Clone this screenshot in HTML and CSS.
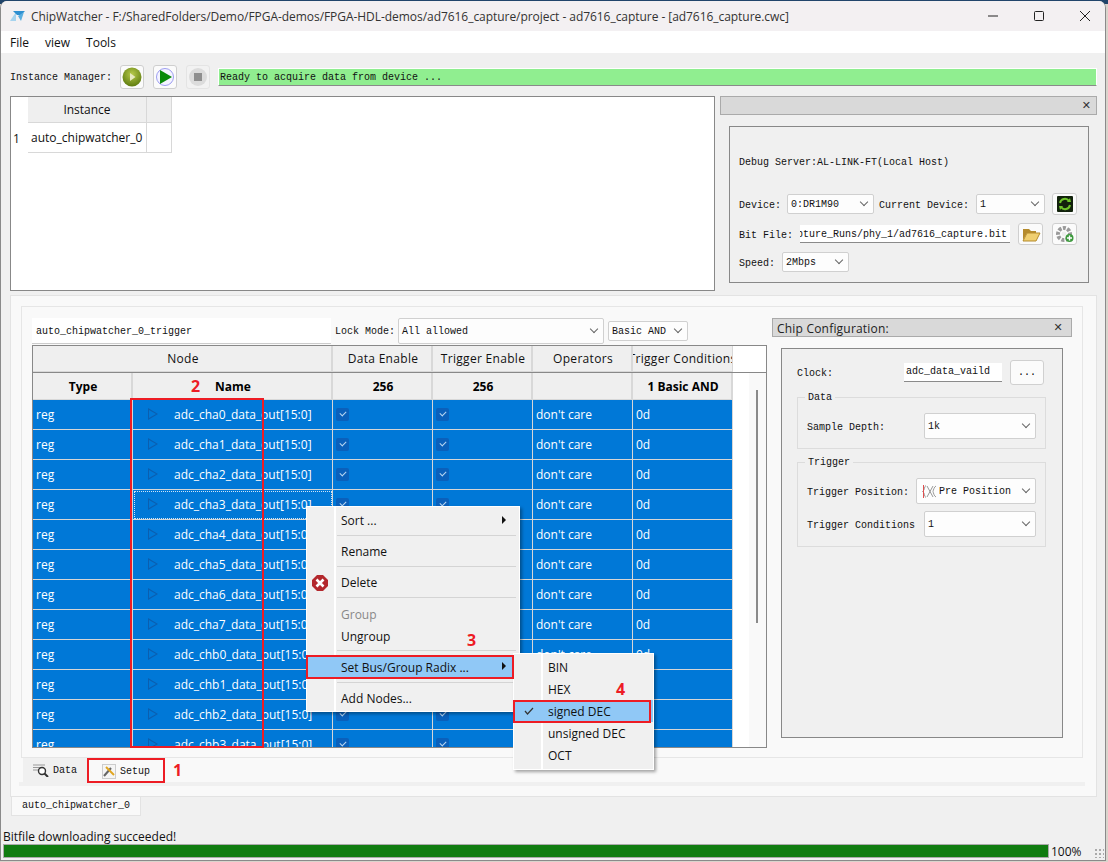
FILE: index.html
```html
<!DOCTYPE html>
<html lang="en">
<head>
<meta charset="utf-8">
<title>ChipWatcher</title>
<link rel="stylesheet" href="styles.css">
</head>
<body>
<div class="window">
  <header class="titlebar">
    <svg class="logo" width="16" height="12" viewBox="0 0 16 12"><path d="M0 11L6 2L6 11Z" fill="#a6d3ee"/><path d="M3 1H15L11 5H7Z" fill="#2f8fd0"/><path d="M8 6L14 2L11 11Z" fill="#5aaee0"/></svg>
    <span class="title-text">ChipWatcher - F:/SharedFolders/Demo/FPGA-demos/FPGA-HDL-demos/ad7616_capture/project - ad7616_capture - [ad7616_capture.cwc]</span>
    <div class="win-controls">
      <svg width="12" height="12" viewBox="0 0 12 12"><path d="M1 6H11" stroke="#222" fill="none"/></svg>
      <svg width="12" height="12" viewBox="0 0 12 12"><rect x="1.5" y="1.5" width="9" height="9" rx="1" stroke="#222" fill="none"/></svg>
      <svg width="12" height="12" viewBox="0 0 12 12"><path d="M1 1L11 11M11 1L1 11" stroke="#222" fill="none"/></svg>
    </div>
  </header>
  <nav class="menubar"><span>File</span><span>view</span><span>Tools</span></nav>
  <section class="toolbar">
    <span class="mono tool-label">Instance Manager:</span>
    <button class="tool-btn"><svg width="20" height="20" viewBox="0 0 20 20"><defs><radialGradient id="olive" cx="50%" cy="35%" r="65%"><stop offset="0" stop-color="#b7c94a"/><stop offset="1" stop-color="#5f7d10"/></radialGradient></defs><circle cx="10" cy="10" r="9.5" fill="url(#olive)"/><path d="M8 6L13.5 10L8 14Z" fill="#e7e9c0"/></svg></button>
    <button class="tool-btn"><svg width="20" height="20" viewBox="0 0 20 20"><circle cx="10" cy="10" r="8.5" fill="#f4f4ff" stroke="#9c9cf0"/><path d="M5 3L17 10L5 17Z" fill="#0a8a0a"/></svg></button>
    <button class="tool-btn disabled"><svg width="20" height="20" viewBox="0 0 20 20"><circle cx="10" cy="10" r="9" fill="#dcdcdc"/><rect x="6" y="6" width="8" height="8" fill="#8f8f8f"/></svg></button>
    <div class="status-field mono">Ready to acquire data from device ...</div>
  </section>

  <section class="top-pane">
    <div class="instance-table">
      <div class="inst-row inst-head"><div class="inst-num"></div><div class="inst-name">Instance</div><div class="inst-end"></div></div>
      <div class="inst-row inst-body"><div class="inst-num">1</div><div class="inst-name">auto_chipwatcher_0</div><div class="inst-end"></div></div>
    </div>
    <aside class="server-dock">
      <div class="dock-title"><span class="dock-close">✕</span></div>
      <div class="server-box mono">
        <div class="server-line">Debug Server:AL-LINK-FT(Local Host)</div>
        <div class="server-row device-row">
          <span>Device:</span>
          <div class="combo device-combo">0:DR1M90<i class="chev"></i></div>
          <span>Current Device:</span>
          <div class="combo current-combo">1<i class="chev"></i></div>
          <button class="tool-btn small"><svg width="18" height="18" viewBox="0 0 18 18"><rect x="1" y="1" width="16" height="16" rx="1" fill="#12220c"/><path d="M4 8A5 5 0 0 1 13 6M14 10A5 5 0 0 1 5 12" stroke="#6fc52a" stroke-width="2" fill="none"/><path d="M11 7L15 7L14 3ZM7 11L3 11L4 15Z" fill="#6fc52a"/></svg></button>
        </div>
        <div class="server-row bit-row">
          <span>Bit File:</span>
          <div class="line-input bit-input"><span>pture_Runs/phy_1/ad7616_capture.bit</span></div>
          <button class="tool-btn small"><svg width="20" height="18" viewBox="0 0 20 18"><path d="M2 15L2 4H8L10 6H15V8H6Z" fill="#b58b2c"/><path d="M2 16L6 8H19L15 16Z" fill="#f0cf70" stroke="#b58b2c"/></svg></button>
          <button class="tool-btn small"><svg width="20" height="18" viewBox="0 0 20 18"><circle cx="9" cy="9" r="6" fill="none" stroke="#9a9a9a" stroke-width="4" stroke-dasharray="3 1.4"/><circle cx="9" cy="9" r="2.4" fill="#eee"/><circle cx="14.5" cy="13" r="4" fill="#3d9a3d"/><path d="M14.5 10.5V15.5M12 13H17" stroke="#fff" stroke-width="1.4"/></svg></button>
        </div>
        <div class="server-row speed-row">
          <span>Speed:</span>
          <div class="combo speed-combo">2Mbps<i class="chev"></i></div>
        </div>
      </div>
    </aside>
  </section>

  <section class="lower-pane">
    <div class="inner-pane">
      <div class="trigger-side">
        <div class="trigger-bar mono">
          <div class="line-input name-input">auto_chipwatcher_0_trigger</div>
          <span class="lock-label">Lock Mode:</span>
          <div class="combo lock-combo">All allowed<i class="chev"></i></div>
          <div class="combo and-combo">Basic AND<i class="chev"></i></div>
        </div>
        <div class="node-table">
          <div class="grid-row head1">
            <div class="hc span2">Node</div><div class="hc">Data Enable</div><div class="hc">Trigger Enable</div><div class="hc">Operators</div><div class="hc clip"><span>Trigger Conditions</span></div>
          </div>
          <div class="grid-row head2">
            <div class="hc bold">Type</div><div class="hc bold">Name</div><div class="hc bold">256</div><div class="hc bold">256</div><div class="hc"></div><div class="hc bold">1 Basic AND</div>
          </div>
          <div class="grid-row sel"><div>reg</div><div class="name"><i class="tri"></i>adc_cha0_data_out[15:0]</div><div><i class="chk"></i></div><div><i class="chk"></i></div><div>don't care</div><div>0d</div></div>
          <div class="grid-row sel"><div>reg</div><div class="name"><i class="tri"></i>adc_cha1_data_out[15:0]</div><div><i class="chk"></i></div><div><i class="chk"></i></div><div>don't care</div><div>0d</div></div>
          <div class="grid-row sel"><div>reg</div><div class="name"><i class="tri"></i>adc_cha2_data_out[15:0]</div><div><i class="chk"></i></div><div><i class="chk"></i></div><div>don't care</div><div>0d</div></div>
          <div class="grid-row sel"><div>reg</div><div class="name focus"><i class="tri"></i>adc_cha3_data_out[15:0]</div><div><i class="chk"></i></div><div><i class="chk"></i></div><div>don't care</div><div>0d</div></div>
          <div class="grid-row sel"><div>reg</div><div class="name"><i class="tri"></i>adc_cha4_data_out[15:0]</div><div><i class="chk"></i></div><div><i class="chk"></i></div><div>don't care</div><div>0d</div></div>
          <div class="grid-row sel"><div>reg</div><div class="name"><i class="tri"></i>adc_cha5_data_out[15:0]</div><div><i class="chk"></i></div><div><i class="chk"></i></div><div>don't care</div><div>0d</div></div>
          <div class="grid-row sel"><div>reg</div><div class="name"><i class="tri"></i>adc_cha6_data_out[15:0]</div><div><i class="chk"></i></div><div><i class="chk"></i></div><div>don't care</div><div>0d</div></div>
          <div class="grid-row sel"><div>reg</div><div class="name"><i class="tri"></i>adc_cha7_data_out[15:0]</div><div><i class="chk"></i></div><div><i class="chk"></i></div><div>don't care</div><div>0d</div></div>
          <div class="grid-row sel"><div>reg</div><div class="name"><i class="tri"></i>adc_chb0_data_out[15:0]</div><div><i class="chk"></i></div><div><i class="chk"></i></div><div>don't care</div><div>0d</div></div>
          <div class="grid-row sel"><div>reg</div><div class="name"><i class="tri"></i>adc_chb1_data_out[15:0]</div><div><i class="chk"></i></div><div><i class="chk"></i></div><div>don't care</div><div>0d</div></div>
          <div class="grid-row sel"><div>reg</div><div class="name"><i class="tri"></i>adc_chb2_data_out[15:0]</div><div><i class="chk"></i></div><div><i class="chk"></i></div><div>don't care</div><div>0d</div></div>
          <div class="grid-row sel"><div>reg</div><div class="name"><i class="tri"></i>adc_chb3_data_out[15:0]</div><div><i class="chk"></i></div><div><i class="chk"></i></div><div>don't care</div><div>0d</div></div>
          <div class="v-track"><div class="v-thumb"></div></div>
        </div>
      </div>
      <aside class="config-side">
        <div class="dock-title chip-title"><span>Chip Configuration:</span><span class="dock-close">✕</span></div>
        <div class="config-box mono">
          <div class="clock-row">
            <span class="clock-label">Clock:</span>
            <div class="line-input clock-input">adc_data_vaild</div>
            <button class="more-btn">...</button>
          </div>
          <fieldset class="group data-group">
            <legend>Data</legend>
            <div class="group-row"><span>Sample Depth:</span><div class="combo cfg-combo">1k<i class="chev"></i></div></div>
          </fieldset>
          <fieldset class="group trig-group">
            <legend>Trigger</legend>
            <div class="group-row"><span>Trigger Position:</span><div class="combo pos-combo"><svg width="14" height="13" viewBox="0 0 14 13"><path d="M4 0.500C2 1 3 5.500 0.500 6.500C3 7.500 2 12 4 12.500M5 1L11 12M11 1L5 12M14 1C12 2 11.500 5 11 6.500C11.500 8 12 11 14 12" stroke="#999" fill="none"/><path d="M1.500 0V13" stroke="#e05050"/></svg><span>Pre Position</span><i class="chev"></i></div></div>
            <div class="group-row"><span>Trigger Conditions</span><div class="combo cfg-combo">1<i class="chev"></i></div></div>
          </fieldset>
        </div>
      </aside>
    </div>
    <div class="view-tabs mono">
      <div class="view-tab"><svg width="16" height="13" viewBox="0 0 16 13"><path d="M0 1H12M0 3.500H8M0 6H6" stroke="#999"/><circle cx="9" cy="7" r="3.500" fill="#fff" stroke="#333" stroke-width="1.400"/><path d="M11.500 9.500L15 13" stroke="#333" stroke-width="2"/></svg>Data</div>
      <div class="view-tab active"><svg width="14" height="15" viewBox="0 0 14 15"><rect x="0.500" y="0.500" width="13" height="14" fill="#f5f5f5" stroke="#ccc"/><path d="M2 12L9 4" stroke="#666" stroke-width="2"/><path d="M4 3L12 11" stroke="#e0a520" stroke-width="2"/></svg>Setup</div>
    </div>
    <div class="tab-band"></div>
  </section>
  <div class="instance-tab mono">auto_chipwatcher_0</div>
  <div class="status-msg">Bitfile downloading succeeded!</div>
  <footer class="progress-row">
    <div class="progress"></div>
    <span class="pct">100%</span>
    <div class="grip"></div>
  </footer>

  <div class="menu context-menu">
    <div class="mi"><span>Sort ...</span><i class="arrow"></i></div>
    <hr>
    <div class="mi"><span>Rename</span></div>
    <hr>
    <div class="mi"><svg class="mi-icon" width="16" height="16" viewBox="0 0 16 16"><path d="M5 0H11L16 5V11L11 16H5L0 11V5Z" fill="#b3282d"/><path d="M4.500 4.500L11.500 11.500M11.500 4.500L4.500 11.500" stroke="#fff" stroke-width="2.600"/></svg><span>Delete</span></div>
    <hr>
    <div class="mi off low"><span>Group</span></div>
    <div class="mi low"><span>Ungroup</span></div>
    <hr>
    <div class="mi hot low"><span>Set Bus/Group Radix ...</span><i class="arrow"></i></div>
    <hr class="wide-gap">
    <div class="mi"><span>Add Nodes...</span></div>
  </div>
  <div class="menu sub-menu">
    <div class="mi low"><span>BIN</span></div>
    <div class="mi low"><span>HEX</span></div>
    <div class="mi hot low"><svg class="mi-check" width="10" height="8" viewBox="0 0 10 8"><path d="M1 4L3.500 7L9 1" stroke="#333" stroke-width="1.200" fill="none"/></svg><span>signed DEC</span></div>
    <div class="mi low"><span>unsigned DEC</span></div>
    <div class="mi low"><span>OCT</span></div>
  </div>

  <div class="mark box-name"></div>
  <div class="mark box-setup"></div>
  <div class="mark box-radix"></div>
  <div class="mark box-signed"></div>
  <span class="num n1">1</span>
  <span class="num n2">2</span>
  <span class="num n3">3</span>
  <span class="num n4">4</span>
</div>
</body>
</html>
```
FILE: styles.css
```css
* { box-sizing: border-box; }
html, body { margin: 0; padding: 0; }
body {
  width: 1108px; height: 862px; overflow: hidden;
  background: linear-gradient(#21456b 0, #21456b 4px, #d9d4cc 4px, #d9d4cc 100%);
  font-family: "Open Sans", "Noto Sans", sans-serif; font-size: 12px; color: #111;
  padding: 1px 2px 1px 0;
}
.mono { font-family: "Liberation Mono", monospace; font-size: 10px; color: #111; }
.window {
  position: relative; width: 1106px; height: 860px; background: #f0f0f0;
  border-radius: 7px 7px 0 0; border: 1px solid #8a8a8a; border-width: 0 1px 1px 1px;
  overflow: hidden; display: flex; flex-direction: column;
}
.titlebar { height: 30px; flex: none; background: #f3f0f2; display: flex; align-items: center; padding-left: 9px; }
.logo { margin-right: 5px; }
.title-text { font-size: 12px; color: #333; white-space: nowrap; letter-spacing: -0.05px; }
.win-controls { margin-left: auto; display: flex; gap: 34px; padding-right: 14px; }
.menubar { height: 22px; flex: none; background: #fff; display: flex; gap: 16px; align-items: center; padding-left: 9px; }
.toolbar { height: 43px; flex: none; display: flex; align-items: center; padding: 4px 8px 0 9px; }
.tool-label { padding-top: 2px; }
.tool-btn {
  width: 24px; height: 24px; padding: 0; margin-left: 9px; background: #fbfbfb;
  border: 1px solid #cfcfcf; border-radius: 3px; display: flex; align-items: center; justify-content: center; flex: none;
}
.toolbar .mono + .tool-btn { margin-left: 8px; }
.tool-btn.disabled { background: #f2f2f2; border-color: #e4e4e4; }
.status-field {
  flex: 1; margin-left: 8px; height: 18px; line-height: 17px; background: #90ee90; padding-left: 1px;
  border: 1px solid #fff; border-bottom-color: #8a8a8a; white-space: nowrap;
}
.top-pane { height: 195px; flex: none; display: flex; padding: 0 8px 0 9px; gap: 5px; }
.instance-table { width: 705px; flex: none; background: #fff; border: 1px solid #888; }
.inst-row { display: flex; }
.inst-num { width: 17px; flex: none; }
.inst-name { width: 119px; flex: none; display: flex; align-items: center; }
.inst-end { width: 25px; flex: none; }
.inst-head { height: 26px; }
.inst-head > div { background: #efefef; border: 1px solid #d8d8d8; border-width: 0 1px 1px 0; justify-content: center; }
.inst-head .inst-num { background: #fff; border: 0; }
.inst-body { height: 30px; }
.inst-body .inst-num { display: flex; align-items: center; padding-left: 2px; background: #fff; }
.inst-body .inst-name { padding-left: 3px; border: 1px solid #d8d8d8; border-width: 0 1px 1px 0; white-space: nowrap; }
.inst-body .inst-end { border: 1px solid #d8d8d8; border-width: 0 1px 1px 0; }
.server-dock { width: 377px; flex: none; display: flex; flex-direction: column; }
.dock-title {
  height: 19px; flex: none; background: #d9d9d9; border: 1px solid #aaa; display: flex;
  align-items: center; justify-content: flex-end; padding: 0 5px;
}
.dock-close { font-size: 11px; font-weight: 700; color: #333; font-family: "DejaVu Sans", sans-serif; line-height: 12px; }
.server-box {
  margin: 11px 8px 8px 9px; flex: 1; border: 1px solid #888; padding: 29px 9px 0; background: #f0f0f0;
}
.server-line { height: 14px; line-height: 14px; }
.server-row { display: flex; align-items: center; white-space: nowrap; }
.server-row > span { padding-top: 2px; }
.device-row { margin-top: 23px; height: 22px; }
.device-combo { width: 87px; margin-left: 6px; margin-right: 5px; }
.current-combo { width: 69px; margin-left: 7px; }
.device-row .tool-btn { margin-left: 7px; }
.tool-btn.small { width: 25px; height: 22px; }
.bit-row { margin-top: 8px; height: 22px; }
.bit-input { width: 210px; margin-left: 7px; height: 18px; overflow: hidden; justify-content: flex-end; padding: 2px 3px 0 0; }
.bit-input span { flex: none; }
.bit-row .tool-btn { margin-left: 8px; }
.bit-row .tool-btn:last-child { margin-left: 9px; }
.speed-row { margin-top: 7px; height: 20px; }
.speed-combo { width: 67px; margin-left: 7px; }
.combo {
  position: relative; height: 20px; line-height: 19px; background: #fdfdfd; border: 1px solid #d0d0d0;
  border-radius: 2px; padding-left: 3px; flex: none; white-space: nowrap; font-family: "Liberation Mono", monospace; font-size: 10px;
}
.chev {
  position: absolute; right: 6px; top: 50%; width: 6px; height: 6px; margin-top: -5px;
  border: 1px solid #666; border-width: 0 1px 1px 0; transform: rotate(45deg);
}
.line-input {
  background: #fff; border-bottom: 1px solid #8a8a8a; display: flex; align-items: center; white-space: nowrap; flex: none;
}
.lower-pane {
  height: 502px; flex: none; margin: 4px 8px 0 9px; background: #f9f9f9; border: 1px solid #e3e3e3; padding: 10px 13px 0 10px;
}
.inner-pane { height: 452px; display: flex; border: 1px solid #e6e6e6; padding: 10px 0 0 10px; }
.trigger-side { width: 735px; flex: none; display: flex; flex-direction: column; }
.trigger-bar { height: 27px; flex: none; display: flex; align-items: center; }
.name-input { width: 299px; height: 26px; padding: 2px 0 0 4px; border-bottom-color: #ccc; }
.lock-label { margin-left: 4px; width: 63px; padding-top: 2px; }
.lock-combo { width: 206px; height: 26px; line-height: 26px; }
.and-combo { width: 80px; margin-left: 4px; }
.node-table {
  margin-top: 1px; height: 403px; background: #fff; border: 1px solid #888; overflow: hidden; position: relative;
}
.grid-row { display: grid; grid-template-columns: 100px 200px 100px 100px 100px 100px; }
.grid-row > div { white-space: nowrap; }
.head1 { height: 27px; border-bottom: 1px solid #888; grid-template-columns: 300px 100px 100px 100px 100px; }
.head2 { height: 27px; }
.hc {
  background: #efefef; display: flex; align-items: center; justify-content: center; overflow: hidden;
  border-right: 2px solid #d8d8d8; border-bottom: 1px solid #d8d8d8; letter-spacing: 0.3px; padding-left: 2px;
}
.clip { border-right: 1px solid #d8d8d8; padding-left: 0; }
.clip span { flex: none; }
.bold { font-weight: 700; color: #000; letter-spacing: 0; }
.sel { height: 30px; width: 700px; background: #0078d7; color: #fff; }
.sel > div { border-right: 1px solid #d6d6d6; border-bottom: 1px solid #d6d6d6; display: flex; align-items: center; padding: 0 0 0 3px; }
.sel > .name { position: relative; padding-left: 41px; }
.name.focus { outline: 1px dotted #cfe4f7; outline-offset: -2px; }
.tri {
  position: absolute; left: 15px; top: 8px; width: 0; height: 0;
  border-left: 10px solid #0b5fb0; border-top: 6px solid transparent; border-bottom: 6px solid transparent;
}
.tri::after {
  content: ""; position: absolute; left: -9px; top: -4px; width: 0; height: 0;
  border-left: 7px solid #0078d7; border-top: 4px solid transparent; border-bottom: 4px solid transparent;
}
.chk { width: 13px; height: 13px; background: #0a60bb; border-radius: 2px; position: relative; }
.chk::after {
  content: ""; position: absolute; left: 4px; top: 3px; width: 5px; height: 3px;
  border: 1px solid #b9d6f2; border-width: 0 0 1px 1px; transform: rotate(-45deg);
}
.v-track { position: absolute; right: 0; top: 27px; bottom: 0; width: 17px; background: #f9f9f9; }
.v-thumb { margin: 17px 0 0 7px; width: 2px; height: 233px; background: #8a8a8a; }
.config-side { margin-left: 5px; width: 300px; flex: none; padding-top: 1px; }
.chip-title { justify-content: space-between; font-size: 12px; color: #222; padding: 1px 8px 0 4px; width: 300px; letter-spacing: 0.2px; }
.config-box {
  margin: 11px 9px 0 9px; width: 282px; height: 390px; background: #f0f0f0; border: 1px solid #888; padding: 10px 15px;
}
.clock-row { display: flex; align-items: center; height: 26px; }
.clock-label { width: 107px; padding-top: 2px; }
.clock-input { width: 98px; height: 19px; padding-left: 2px; }
.more-btn {
  width: 34px; height: 25px; margin-left: 8px; background: #fbfbfb; border: 1px solid #d0d0d0; border-radius: 3px;
  font: inherit; padding: 0;
}
.group { margin: 0; border: 1px solid #dcdcdc; padding: 0 9px 0 9px; min-width: 0; width: 249px; }
.group legend { padding: 0 3px; margin-left: -2px; line-height: 12px; font-size: 10px; position: relative; top: 1px; }
.data-group { margin-top: 6px; height: 58px; }
.trig-group { margin-top: 7px; height: 91px; }
.group-row { display: flex; align-items: center; justify-content: space-between; height: 26px; margin-top: 7px; white-space: nowrap; }
.group-row > span { padding-top: 2px; }
.data-group .group-row { margin-top: 10px; }
.trig-group .group-row:first-of-type { margin-top: 10px; }
.cfg-combo { width: 112px; height: 26px; line-height: 26px; }
.pos-combo { width: 120px; height: 26px; display: flex; align-items: center; gap: 3px; padding-left: 5px; }
.pos-combo span { padding-top: 2px; line-height: 20px; }
.view-tabs { height: 24px; display: flex; margin-left: 2px; margin-top: 0; align-items: stretch; }
.view-tab { display: flex; align-items: center; gap: 4px; padding: 0 0 0 10px; background: #f0f0f0; width: 65px; }
.view-tab.active { background: #f9f9f9; width: 77px; padding: 2px 0 0 14px; }
.tab-band { height: 4px; background: #f0f0f0; margin: 0 -2px; }
.instance-tab {
  flex: none; margin: 0 0 0 10px; width: 130px; height: 19px; background: #f9f9f9; border: 1px solid #e3e3e3; border-top: 0; text-align: center; line-height: 18px;
}
.status-msg { height: 15px; margin-top: 13px; line-height: 15px; padding-left: 2px; flex: none; white-space: nowrap; }
.progress-row { display: flex; height: 14px; flex: none; position: relative; padding-left: 2px; align-items: center; }
.progress { width: 1046px; height: 14px; background: #107c10; border: 1px solid #aaa; }
.pct { margin-left: 2px; }
.grip { position: absolute; right: 1px; bottom: 0; width: 10px; height: 10px; background: radial-gradient(circle, #aaa 1px, transparent 1.2px) 0 0/4px 4px; }

.menu { position: absolute; background: #f0f0f0; border: 1px solid #fff; box-shadow: 2px 2px 3px rgba(0,0,0,.35); z-index: 5; }
.menu::before { content: ""; position: absolute; left: 27px; top: 0; bottom: 0; width: 2px; background: #fff; }
.mi { height: 22px; position: relative; display: flex; align-items: center; padding: 0 0 2px 34px; color: #111; white-space: nowrap; }
.mi.low { padding-bottom: 0; }
.mi.off { color: #888; }
.mi.hot { background: #90c8f6; }
.menu hr { margin: 3px 3px 5px 30px; border: 0; height: 1px; background: #d4d4d4; }
.menu hr.wide-gap { margin-top: 4px; }
.context-menu { left: 305px; top: 505px; width: 214px; height: 206px; padding-top: 3px; }
.sub-menu { left: 512px; top: 652px; width: 141px; height: 117px; padding-top: 2px; }
.arrow {
  position: absolute; right: 13px; top: 6px; width: 0; height: 0;
  border-left: 4px solid #111; border-top: 4px solid transparent; border-bottom: 4px solid transparent;
}
.mi-icon { position: absolute; left: 5px; top: 3px; }
.mi-check { position: absolute; left: 10px; top: 7px; }
.mark { position: absolute; border: 2px solid #ed1c24; z-index: 6; pointer-events: none; }
.box-name { left: 129px; top: 397px; width: 134px; height: 350px; }
.box-setup { left: 86px; top: 757px; width: 78px; height: 25px; }
.box-radix { left: 305px; top: 654px; width: 208px; height: 24px; }
.box-signed { left: 512px; top: 699px; width: 138px; height: 23px; }
.num { position: absolute; color: #ed1c24; font-weight: 700; font-size: 16px; line-height: 16px; z-index: 7; }
.n1 { left: 172px; top: 761px; }
.n2 { left: 190px; top: 377px; }
.n3 { left: 466px; top: 631px; }
.n4 { left: 615px; top: 680px; }
```
